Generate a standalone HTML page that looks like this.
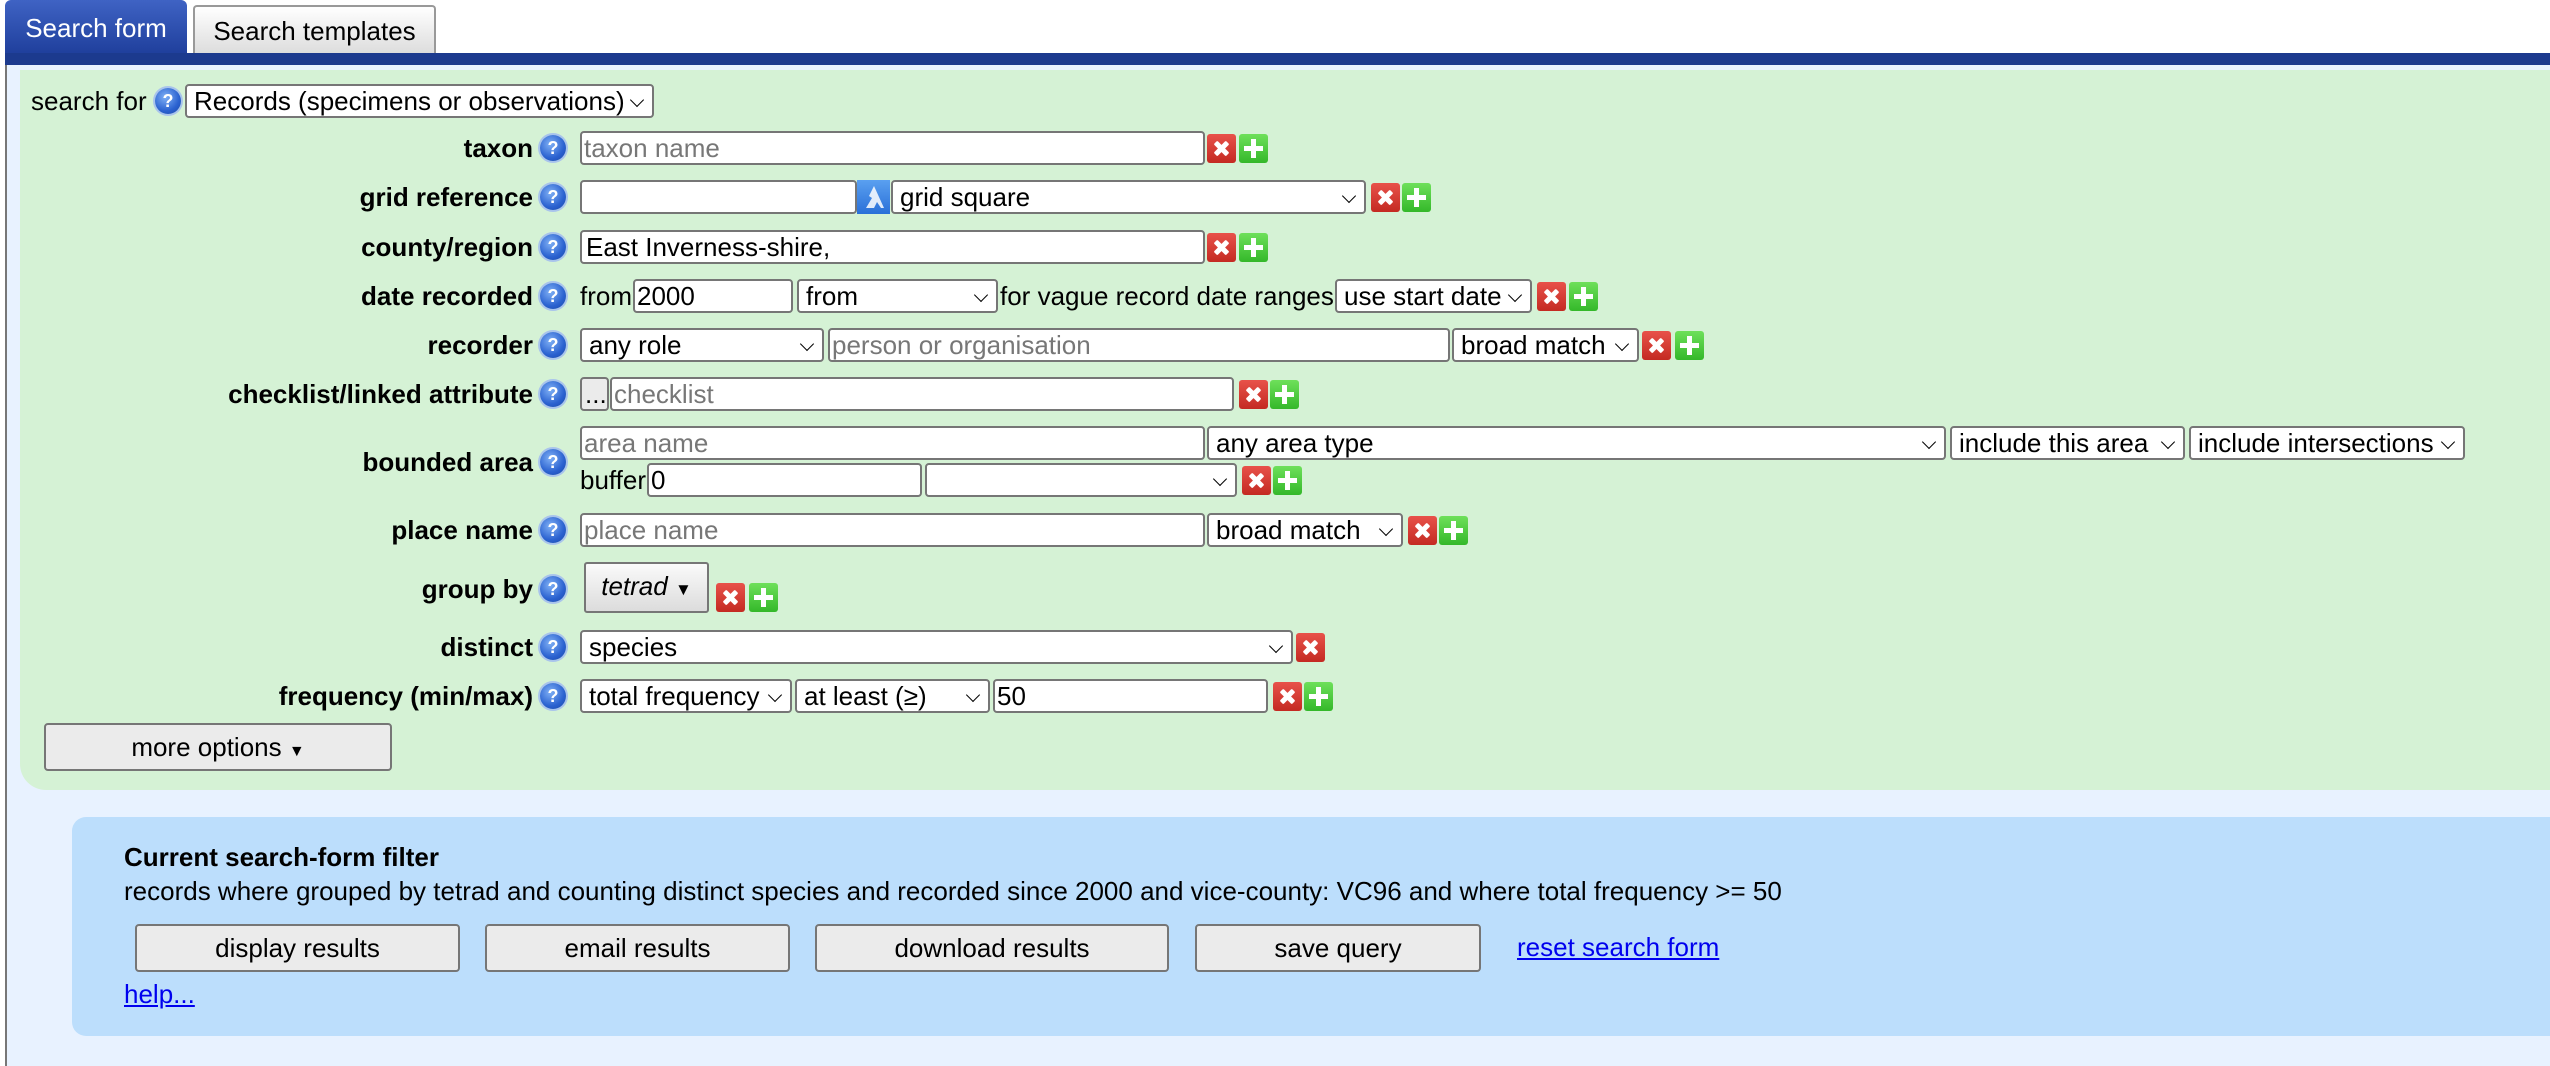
<!DOCTYPE html>
<html><head><meta charset="utf-8"><style>
*{box-sizing:border-box}
body{margin:0;width:2550px;height:1066px;overflow:hidden;background:#fff;font-family:"Liberation Sans",Arial,sans-serif;font-size:26px;color:#000;position:relative}
.a{position:absolute}
.tab1{left:5px;top:0;width:182px;height:54px;background:linear-gradient(#3f63c4,#1f3f9c);color:#fff;border-radius:6px 6px 0 0;text-align:center;line-height:56px;font-size:26px}
.tab2{left:193px;top:5px;width:243px;height:48px;background:linear-gradient(#fff,#ddd);border:2px solid #999;border-bottom:none;border-radius:4px 4px 0 0;text-align:center;line-height:48px;font-size:26px}
.bar{left:5px;top:53px;width:2545px;height:12px;background:#1c3a8e}
.body{left:5px;top:65px;width:2545px;height:1001px;background:#e8f2ff;border-left:2px solid #777}
.green{left:20px;top:70px;width:2530px;height:720px;background:#d5f2d5;border-radius:0 0 0 26px}
.blue{left:72px;top:817px;width:2478px;height:219px;background:#bcdefc;border-radius:14px 0 0 14px}
.lbl{position:absolute;right:2017px;font-weight:bold;height:34px;line-height:34px;white-space:nowrap}
.h{position:absolute;width:26px;height:26px;border-radius:50%;background:radial-gradient(circle at 40% 35%,#7fb0f5,#2b62d0 60%,#1a46a8);box-shadow:0 0 0 2px #a9c4ec;color:#fff;font-size:18px;font-weight:bold;text-align:center;line-height:26px}
.b{position:absolute;height:34px;border:2px solid #767676;border-radius:4px;background:#fff;line-height:30px;padding-left:7px;white-space:nowrap;overflow:hidden}
.ph{color:#777}
.s::after{content:"";position:absolute;right:10px;top:9px;width:9px;height:9px;border-right:1.5px solid #000;border-bottom:1.5px solid #000;transform:rotate(45deg)}
.x,.p{position:absolute;width:29px;height:29px;border-radius:3px}
.x{background:linear-gradient(#e8524a,#c42a22)}
.p{background:linear-gradient(#6ee05a,#34b82a)}
.x::before,.x::after{content:"";position:absolute;left:6px;top:12px;width:17px;height:5px;background:#fff;border-radius:1px}
.x::before{transform:rotate(45deg)}.x::after{transform:rotate(-45deg)}
.p::before{content:"";position:absolute;left:5px;top:12px;width:19px;height:5px;background:#fff}
.p::after{content:"";position:absolute;left:12px;top:5px;width:5px;height:19px;background:#fff}
.t{position:absolute;height:34px;line-height:34px;white-space:nowrap}
.btn{position:absolute;height:48px;border:2px solid #767676;border-radius:4px;background:#ebebeb;text-align:center;line-height:44px}
a{color:#0000ee;text-decoration:underline}
</style></head><body>
<div class="a tab1">Search form</div>
<div class="a tab2">Search templates</div>
<div class="a bar"></div>
<div class="a body"></div>
<div class="a green"></div>
<div class="a blue"></div>

<div class="t" style="left:31px;top:84px">search for</div>
<div class="h" style="left:155px;top:88px">?</div>
<div class="b s" style="left:185px;top:84px;width:469px">Records (specimens or observations)<span></span></div>

<div class="lbl" style="top:131px">taxon</div><div class="h" style="left:540px;top:135px">?</div>
<div class="b ph" style="left:580px;top:131px;width:625px;padding-left:2px">taxon name</div>
<div class="x" style="left:1207px;top:134px"></div><div class="p" style="left:1239px;top:134px"></div>

<div class="lbl" style="top:180px">grid reference</div><div class="h" style="left:540px;top:184px">?</div>
<div class="b" style="left:580px;top:180px;width:277px"></div>
<div class="a" style="left:857px;top:180px;width:33px;height:34px;background:linear-gradient(#5aa0f0,#2a70d8)"><svg width="33" height="34"><path d="M17 6l-5 10 3 2-6 10h8l3-6 4 6h3l-5-11z" fill="#fff" opacity=".85"/></svg></div>
<div class="b s" style="left:891px;top:180px;width:475px">grid square</div>
<div class="x" style="left:1371px;top:183px"></div><div class="p" style="left:1402px;top:183px"></div>

<div class="lbl" style="top:230px">county/region</div><div class="h" style="left:540px;top:234px">?</div>
<div class="b" style="left:580px;top:230px;width:625px;padding-left:4px">East Inverness-shire,</div>
<div class="x" style="left:1207px;top:233px"></div><div class="p" style="left:1239px;top:233px"></div>

<div class="lbl" style="top:279px">date recorded</div><div class="h" style="left:540px;top:283px">?</div>
<div class="t" style="left:580px;top:279px">from</div>
<div class="b" style="left:633px;top:279px;width:160px;padding-left:2px">2000</div>
<div class="b s" style="left:797px;top:279px;width:201px">from</div>
<div class="t" style="left:1000px;top:279px">for vague record date ranges</div>
<div class="b s" style="left:1335px;top:279px;width:197px">use start date</div>
<div class="x" style="left:1537px;top:282px"></div><div class="p" style="left:1569px;top:282px"></div>

<div class="lbl" style="top:328px">recorder</div><div class="h" style="left:540px;top:332px">?</div>
<div class="b s" style="left:580px;top:328px;width:244px">any role</div>
<div class="b ph" style="left:828px;top:328px;width:622px;padding-left:2px">person or organisation</div>
<div class="b s" style="left:1452px;top:328px;width:187px">broad match</div>
<div class="x" style="left:1642px;top:331px"></div><div class="p" style="left:1675px;top:331px"></div>

<div class="lbl" style="top:377px">checklist/linked attribute</div><div class="h" style="left:540px;top:381px">?</div>
<div class="b" style="left:580px;top:377px;width:29px;background:#ebebeb;padding-left:3px">...</div>
<div class="b ph" style="left:610px;top:377px;width:624px;padding-left:2px">checklist</div>
<div class="x" style="left:1239px;top:380px"></div><div class="p" style="left:1270px;top:380px"></div>

<div class="lbl" style="top:445px">bounded area</div><div class="h" style="left:540px;top:449px">?</div>
<div class="b ph" style="left:580px;top:426px;width:625px;padding-left:2px">area name</div>
<div class="b s" style="left:1207px;top:426px;width:739px">any area type</div>
<div class="b s" style="left:1950px;top:426px;width:235px">include this area</div>
<div class="b s" style="left:2189px;top:426px;width:276px">include intersections</div>
<div class="t" style="left:580px;top:463px">buffer</div>
<div class="b" style="left:647px;top:463px;width:275px;padding-left:2px">0</div>
<div class="b s" style="left:925px;top:463px;width:312px"></div>
<div class="x" style="left:1242px;top:466px"></div><div class="p" style="left:1273px;top:466px"></div>

<div class="lbl" style="top:513px">place name</div><div class="h" style="left:540px;top:517px">?</div>
<div class="b ph" style="left:580px;top:513px;width:625px;padding-left:2px">place name</div>
<div class="b s" style="left:1207px;top:513px;width:196px">broad match</div>
<div class="x" style="left:1408px;top:516px"></div><div class="p" style="left:1439px;top:516px"></div>

<div class="lbl" style="top:572px">group by</div><div class="h" style="left:540px;top:576px">?</div>
<div class="a" style="left:584px;top:562px;width:125px;height:51px;border:2px solid #767676;border-radius:3px;background:linear-gradient(#fafafa,#dcdcdc);text-align:center;line-height:44px;font-style:italic">tetrad <span style="font-style:normal;font-size:17px">▼</span></div>
<div class="x" style="left:716px;top:583px"></div><div class="p" style="left:749px;top:583px"></div>

<div class="lbl" style="top:630px">distinct</div><div class="h" style="left:540px;top:634px">?</div>
<div class="b s" style="left:580px;top:630px;width:713px">species</div>
<div class="x" style="left:1296px;top:633px"></div>

<div class="lbl" style="top:679px">frequency (min/max)</div><div class="h" style="left:540px;top:683px">?</div>
<div class="b s" style="left:580px;top:679px;width:212px">total frequency</div>
<div class="b s" style="left:795px;top:679px;width:195px">at least (≥)</div>
<div class="b" style="left:993px;top:679px;width:275px;padding-left:2px">50</div>
<div class="x" style="left:1273px;top:682px"></div><div class="p" style="left:1304px;top:682px"></div>

<div class="btn" style="left:44px;top:723px;width:348px">more options <span style="font-size:16px">▼</span></div>

<div class="t" style="left:124px;top:840px;font-weight:bold">Current search-form filter</div>
<div class="t" style="left:124px;top:874px">records where grouped by tetrad and counting distinct species and recorded since 2000 and vice-county: VC96 and where total frequency &gt;= 50</div>
<div class="btn" style="left:135px;top:924px;width:325px">display results</div>
<div class="btn" style="left:485px;top:924px;width:305px">email results</div>
<div class="btn" style="left:815px;top:924px;width:354px">download results</div>
<div class="btn" style="left:1195px;top:924px;width:286px">save query</div>
<div class="t" style="left:1517px;top:930px"><a>reset search form</a></div>
<div class="t" style="left:124px;top:977px"><a>help...</a></div>
</body></html>
